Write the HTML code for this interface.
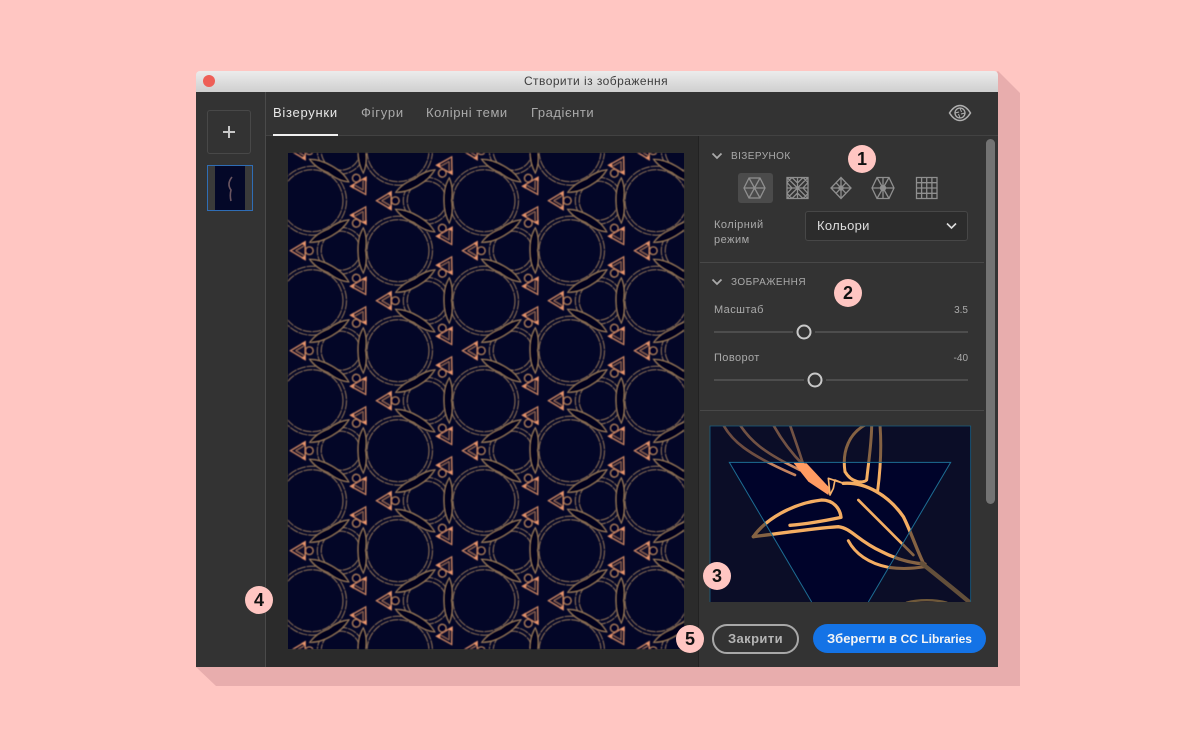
<!DOCTYPE html>
<html><head><meta charset="utf-8"><style>
html,body{margin:0;padding:0;width:1200px;height:750px;overflow:hidden;background:#ffc6c2}
body{position:relative;font-family:"Liberation Sans",sans-serif}
.a{position:absolute;white-space:nowrap;line-height:1}
.b{position:absolute;width:28px;height:28px;border-radius:50%;background:#ffc6c2;color:#111;font-size:18px;font-weight:bold;line-height:28px;text-align:center}
svg{position:absolute;overflow:visible}
</style></head><body>
<svg style="left:0;top:0" width="1200" height="750"><polygon points="998,71 1020,93 1020,686 216,686 196,667" fill="#e8adad"/></svg>
<div class="a" style="left:196px;top:71px;width:802px;height:21px;background:linear-gradient(#ececec,#cfcfcf);border-radius:4px 4px 0 0"></div>
<div class="a" style="left:203px;top:75px;width:12px;height:12px;border-radius:50%;background:#ee5f57"></div>
<div class="a" style="left:196px;top:75px;width:800px;text-align:center;font-size:12px;letter-spacing:.45px;color:#3d3d3d">Створити із зображення</div>
<div class="a" style="left:196px;top:92px;width:802px;height:575px;background:#333"></div>
<div class="a" style="left:266px;top:136px;width:432px;height:531px;background:#2b2b2b"></div>
<div class="a" style="left:265px;top:92px;width:1px;height:575px;background:#4a4a4a"></div>
<div class="a" style="left:266px;top:135px;width:732px;height:1px;background:#424242"></div>
<div class="a" style="left:698px;top:136px;width:1px;height:531px;background:#222"></div>
<div class="a" style="left:207px;top:110px;width:42px;height:42px;border:1px solid #484848;border-radius:3px"></div>
<svg style="left:207px;top:110px" width="44" height="44"><path d="M22 16v12M16 22h12" stroke="#c8c8c8" stroke-width="2"/></svg>
<div class="a" style="left:207px;top:165px;width:44px;height:44px;border:1px solid #2f6db5;background:#3a3a3a"></div>
<div class="a" style="left:215px;top:166px;width:30px;height:44px;background:#040828"></div>
<svg style="left:215px;top:166px" width="30" height="44"><path d="M17 11C13 16 13 20 16 24C15 28 15 31 16 35" stroke="#6a5560" stroke-width="1.600" fill="none"/></svg>
<div class="a" style="left:273px;top:106px;font-size:13px;letter-spacing:.72px;color:#e8e8e8">Візерунки</div>
<div class="a" style="left:273px;top:134px;width:65px;height:2px;background:#f0f0f0"></div>
<div class="a" style="left:361px;top:106px;font-size:13px;letter-spacing:.75px;color:#aaa">Фігури</div>
<div class="a" style="left:426px;top:106px;font-size:13px;letter-spacing:.55px;color:#aaa">Колірні теми</div>
<div class="a" style="left:531px;top:106px;font-size:13px;letter-spacing:.55px;color:#aaa">Градієнти</div>
<svg style="left:948px;top:102px" width="24" height="22" fill="none" stroke="#b0b0b0"><path d="M1.500 11C5 5.500 8.500 3.500 12 3.500S19 5.500 22.500 11C19 16.500 15.500 18.500 12 18.500S5 16.500 1.500 11Z" stroke-width="1.500"/><circle cx="12" cy="11" r="5" stroke-width="1.300"/><path d="M12 6l1.500 4M17 11l-4 1M12 16l-1.500-4M7 11l4-1" stroke-width="1"/></svg>

<svg style="left:288px;top:153px" width="396" height="496" viewBox="0 0 396 496">
<defs>
<g id="lf">
<path d="M27 6C35 2 43 2.500 49.700 3.500C56 2.500 64 2 72.500 6C64 11 56 11.500 49.700 11.500C43 11.500 35 11 27 6Z" fill="#02041f" stroke="#a98660" stroke-width="1"/>
</g>
<g id="t">
<circle cx="26" cy="0" r="4" fill="#030627" stroke="#b98660" stroke-width="1.100"/>
<path d="M7 0L22-9V9Z" fill="#0a0a2a" stroke="#dc9069" stroke-width="1.100"/>
<path d="M12.500 0L21-5M12.500 0L21 5" stroke="#b87f5e" stroke-width=".8" fill="none"/>
<path d="M22.500-10L18-7.500L22.500-4ZM22.500 10L18 7.500L22.500 4Z" fill="#e8946c"/>
</g>
<g id="e">
<use href="#t"/><use href="#t" transform="rotate(120)"/><use href="#t" transform="rotate(240)"/>
<use href="#lf" transform="rotate(-30)"/><use href="#lf" transform="rotate(90)"/><use href="#lf" transform="rotate(210)"/>
</g>
<pattern id="c" width="172" height="100" patternUnits="userSpaceOnUse" patternTransform="translate(81.300,47.700)">
<g fill="none" stroke="#98795a" stroke-width="1" stroke-dasharray="9 .8">
<circle cx="28.700" cy="50" r="31"/><circle cx="28.700" cy="50" r="34.500"/><circle cx="200.700" cy="50" r="31"/><circle cx="200.700" cy="50" r="34.500"/><circle cx="114.700" cy="0" r="31"/><circle cx="114.700" cy="0" r="34.500"/><circle cx="114.700" cy="100" r="31"/><circle cx="114.700" cy="100" r="34.500"/>
<circle cx="57.400" cy="0" r="19.500"/><circle cx="57.400" cy="0" r="23.400"/><circle cx="57.400" cy="100" r="19.500"/><circle cx="57.400" cy="100" r="23.400"/><circle cx="143.400" cy="50" r="19.500"/><circle cx="143.400" cy="50" r="23.400"/>
</g>
</pattern>
<pattern id="f" width="172" height="100" patternUnits="userSpaceOnUse" patternTransform="translate(81.300,47.700)">
<use href="#e"/><use href="#e" x="172"/><use href="#e" y="100"/><use href="#e" x="172" y="100"/><use href="#e" x="86" y="50"/><use href="#e" x="-86" y="50"/><use href="#e" x="258" y="50"/><use href="#e" x="86" y="-50"/><use href="#e" x="86" y="150"/><use href="#e" y="-100"/><use href="#e" x="172" y="-100"/><use href="#e" y="200"/><use href="#e" x="172" y="200"/>
</pattern>
<filter id="bl"><feGaussianBlur stdDeviation=".4"/></filter>
</defs>
<rect width="396" height="496" fill="#030627"/>
<g filter="url(#bl)"><rect width="396" height="496" fill="url(#c)"/><rect width="396" height="496" fill="url(#f)"/></g>
</svg>

<div class="a" style="left:986px;top:139px;width:9px;height:365px;background:#737373;border-radius:5px"></div>
<div class="a" style="left:700px;top:262px;width:284px;height:1px;background:#484848"></div>
<div class="a" style="left:700px;top:410px;width:284px;height:1px;background:#484848"></div>
<svg style="left:711px;top:151px" width="12" height="10"><path d="M1.500 2.500L6 7L10.500 2.500" stroke="#aaa" stroke-width="1.800" fill="none"/></svg>
<div class="a" style="left:731px;top:152px;font-size:10px;letter-spacing:.42px;color:#aaa">ВІЗЕРУНОК</div>
<svg style="left:711px;top:277px" width="12" height="10"><path d="M1.500 2.500L6 7L10.500 2.500" stroke="#aaa" stroke-width="1.800" fill="none"/></svg>
<div class="a" style="left:731px;top:278px;font-size:10px;letter-spacing:.45px;color:#aaa">ЗОБРАЖЕННЯ</div>

<div class="a" style="left:738px;top:173px;width:35px;height:30px;border-radius:3px;background:#4b4b4b"></div>
<svg style="left:738px;top:173px" width="200" height="30" fill="none" stroke="#8f8f8f" stroke-width="1.300">
<path d="M11 5H22L27 15L22 25H11L6 15ZM6 15H27M11 5L22 25M22 5L11 25"/>
<path d="M49 4.500H70V25.500H49ZM49 4.500L70 25.500M70 4.500L49 25.500M59.500 4.500V25.500M49 15H70M54 4.500L49 9.500M65 4.500L70 9.500M54 25.500L49 20.500M65 25.500L70 20.500M49 9.500L54 15L49 20.500M70 9.500L65 15L70 20.500M54 4.500L59.500 10L65 4.500M54 25.500L59.500 20L65 25.500"/>
<path d="M103 4.500L113 15L103 25.500L93 15ZM103 4.500V25.500M93 15H113M98 9.700L108 20.300M108 9.700L98 20.300"/><circle cx="103" cy="15" r="2" fill="#8f8f8f"/>
<path d="M139 4.500H151L156 15L151 25.500H139L134 15ZM139 4.500L151 25.500M151 4.500L139 25.500M134 15H156M145 4.500V25.500"/><circle cx="145" cy="15" r="2.500" fill="#8f8f8f"/>
<path d="M178.500 4.500H199V25.500H178.500ZM178.500 9.700H199M178.500 15H199M178.500 20.300H199M183.600 4.500V25.500M188.700 4.500V25.500M193.900 4.500V25.500"/>
</svg>

<div class="a" style="left:714px;top:220px;font-size:11px;letter-spacing:.5px;color:#aaa">Колірний</div>
<div class="a" style="left:714px;top:235px;font-size:11px;letter-spacing:.5px;color:#aaa">режим</div>
<div class="a" style="left:805px;top:211px;width:161px;height:28px;background:#2c2c2c;border:1px solid #474747;border-radius:3px"></div>
<div class="a" style="left:817px;top:219px;font-size:13px;letter-spacing:.3px;color:#ddd">Кольори</div>
<svg style="left:945px;top:221px" width="13" height="10"><path d="M2 2.500L6.500 7L11 2.500" stroke="#ddd" stroke-width="1.600" fill="none"/></svg>

<div class="a" style="left:714px;top:305px;font-size:11px;letter-spacing:.4px;color:#aaa">Масштаб</div>
<div class="a" style="left:900px;top:306px;width:68px;text-align:right;font-size:10px;color:#aaa">3.5</div>
<div class="a" style="left:714px;top:353px;font-size:11px;letter-spacing:.4px;color:#aaa">Поворот</div>
<div class="a" style="left:900px;top:354px;width:68px;text-align:right;font-size:10px;color:#aaa">-40</div>
<svg style="left:700px;top:320px" width="280" height="72" fill="none">
<path d="M14 12H93M115 12H268M14 60H104M126 60H268" stroke="#565656" stroke-width="1.400"/>
<circle cx="104" cy="12" r="6.500" stroke="#c9c9c9" stroke-width="2"/><circle cx="115" cy="60" r="6.500" stroke="#c9c9c9" stroke-width="2"/>
</svg>

<svg style="left:695px;top:420px" width="330" height="270" viewBox="0 0 990 810">
<defs><clipPath id="cp"><rect x="45" y="18" width="782" height="528"/></clipPath></defs>
<rect x="45" y="18" width="782" height="528" fill="#00032a"/>
<g clip-path="url(#cp)" fill="none" stroke-linecap="round" stroke-linejoin="round">
<g stroke="#f4ad62" stroke-width="9">
<path d="M85 15C110 60 150 100 300 165" stroke="#c4835f" stroke-width="8"/>
<path d="M135 15C165 60 200 95 315 150" stroke="#cf8c64" stroke-width="8"/>
<path d="M235 15C260 60 290 100 325 135" stroke="#cf8c64" stroke-width="8"/>
<path d="M285 15C300 60 315 100 325 135" stroke="#cf8c64" stroke-width="8"/>
<path d="M450 155C440 90 465 40 510 15"/>
<path d="M450 155C470 190 505 190 515 180C520 130 530 70 530 15"/>
<path d="M548 212C556 150 560 80 555 15"/>
<path d="M445 190C510 185 580 225 625 290C650 340 665 390 690 440" stroke-width="10"/>
<path d="M175 350C210 300 290 250 380 240C415 240 435 265 438 292C390 302 330 312 285 316" stroke-width="10"/>
<path d="M175 350C260 340 350 325 430 320C470 325 485 360 560 395C610 420 650 430 690 432" stroke-width="10"/>
<path d="M490 240C540 290 600 350 655 405" stroke-width="8"/>
<path d="M460 362C480 400 520 430 580 442C620 448 660 445 690 440" stroke-width="9"/>
<path d="M680 430C730 470 780 510 825 548" stroke="#b08650" stroke-width="13"/>
<path d="M635 548C670 538 720 538 755 548" stroke="#c89a50" stroke-width="7"/>
</g>
<path d="M295 128L335 130L405 205L400 225L340 185Z" fill="#ff9b62"/>
<path d="M405 225L400 175L445 190L420 180L415 205Z" stroke="#f5b16a" stroke-width="5"/>
<path d="M0 0H990V546H0ZM103 127L435 690L767 127Z" fill="#161824" fill-opacity=".5" fill-rule="evenodd"/>
</g>
<path d="M45 546V18H827V546" fill="none" stroke="#1a5f80" stroke-width="2.500"/>
<path d="M350 546L103 127H767L520 546" fill="none" stroke="#1d6d93" stroke-width="3"/>
</svg>

<div class="a" style="left:712px;top:624px;width:83px;height:26px;border:2px solid #a8a8a8;border-radius:15px;text-align:center;line-height:26px;font-size:13px;font-weight:bold;letter-spacing:.4px;color:#b5b5b5">Закрити</div>
<div class="a" style="left:813px;top:624px;width:173px;height:29px;background:#1473e6;border-radius:15px;text-align:center;line-height:29px;font-size:13px;font-weight:bold;color:#f5f5f5">Зберегти в <span style="font-size:12px">CC Libraries</span></div>

<div class="b" style="left:848px;top:145px">1</div>
<div class="b" style="left:834px;top:279px">2</div>
<div class="b" style="left:703px;top:562px">3</div>
<div class="b" style="left:245px;top:586px">4</div>
<div class="b" style="left:676px;top:625px">5</div>
</body></html>
